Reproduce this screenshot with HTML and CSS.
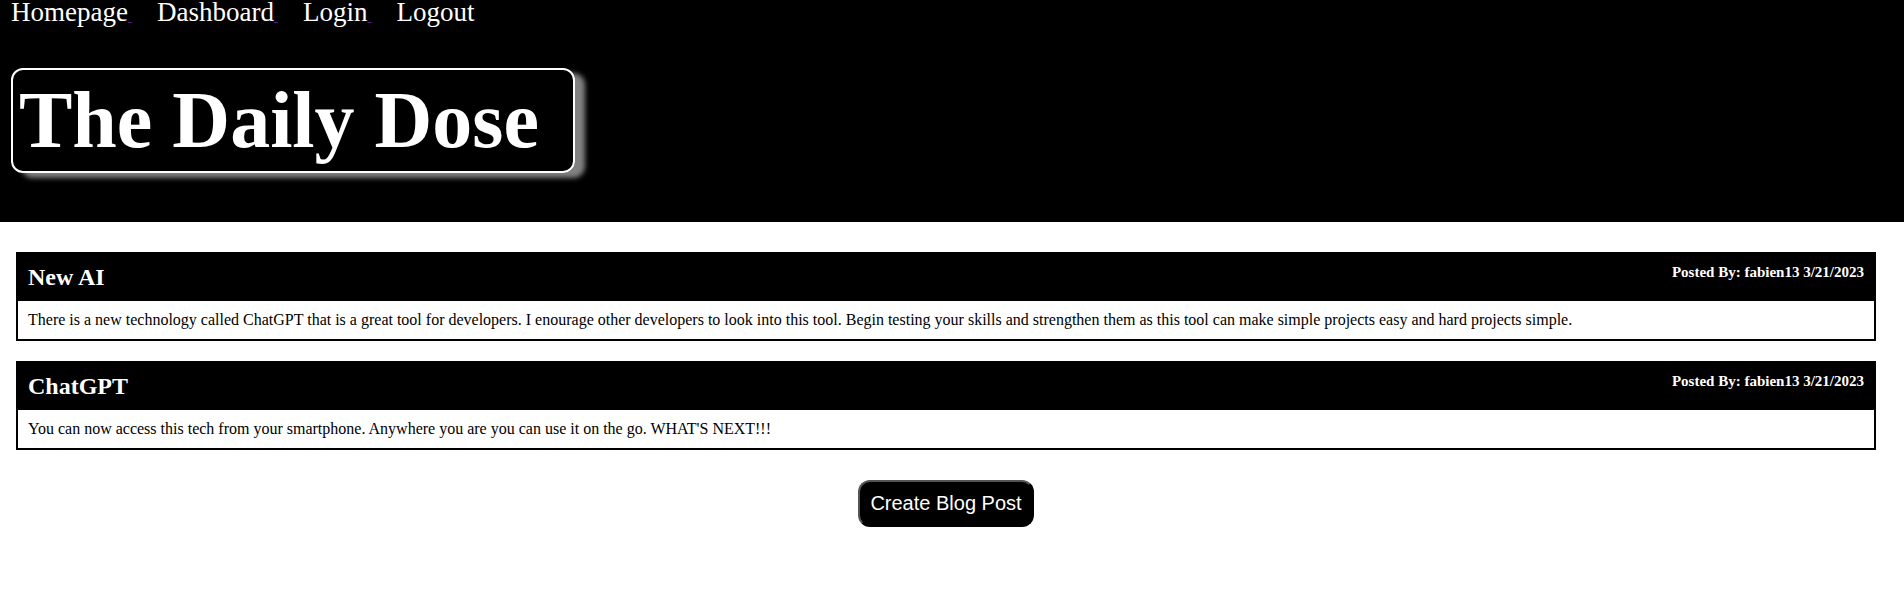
FILE: index.html
```html
<!DOCTYPE html>
<html lang="en">
<head>
<meta charset="utf-8">
<title>The Daily Dose</title>
<link rel="stylesheet" href="styles.css">
</head>
<body>
<header class="site-header">
  <nav class="nav">
    <a class="nav-link" href="#home"><span class="nav-label">Homepage</span>&nbsp;</a>
    <a class="nav-link" href="#dashboard"><span class="nav-label">Dashboard</span>&nbsp;</a>
    <a class="nav-link" href="#login"><span class="nav-label">Login</span>&nbsp;</a>
    <a class="nav-link" href="#logout"><span class="nav-label">Logout</span></a>
  </nav>
  <h1 class="site-title">The Daily Dose</h1>
</header>
<main class="content">
  <article class="post">
    <div class="post-header">
      <h2 class="post-title">New AI</h2>
      <p class="post-meta">Posted By: fabien13 3/21/2023</p>
    </div>
    <p class="post-body">There is a new technology called ChatGPT that is a great tool for developers. I enourage other developers to look into this tool. Begin testing your skills and strengthen them as this tool can make simple projects easy and hard projects simple.</p>
  </article>
  <article class="post">
    <div class="post-header">
      <h2 class="post-title">ChatGPT</h2>
      <p class="post-meta">Posted By: fabien13 3/21/2023</p>
    </div>
    <p class="post-body">You can now access this tech from your smartphone. Anywhere you are you can use it on the go. WHAT'S NEXT!!!</p>
  </article>
  <button class="create-button" type="button">Create Blog Post</button>
</main>
</body>
</html>
```
FILE: styles.css
```css
body {
  margin: 0;
  background: #fff;
  color: #000;
  font-family: "Liberation Serif", "Times New Roman", serif;
  font-size: 16px;
}

.site-header {
  display: flex;
  flex-direction: column;
  align-items: flex-start;
  gap: 40px;
  padding: 0 11px 49px;
  background: #000;
}

.nav {
  display: flex;
  gap: 25px;
  line-height: 25px;
}

.nav-link {
  color: #551a8b;
}

.nav-label {
  display: inline-block;
  color: #fff;
  font-size: 27px;
}

.site-title {
  margin: 0;
  padding: 5px 34px 5px 6px;
  border: 2px solid #fff;
  border-radius: 12px;
  box-shadow: 10px 5px 5px gray;
  color: #fff;
  font-size: 80px;
  line-height: 91px;
}

.content {
  display: flex;
  flex-direction: column;
  gap: 20px;
  padding: 30px 28px 30px 16px;
}

.post {
  border: 2px solid #000;
}

.post-header {
  display: flex;
  justify-content: space-between;
  align-items: flex-start;
  padding: 10px;
  background: #000;
  color: #fff;
}

.post-title {
  margin: 0;
  font-size: 24px;
  line-height: 27px;
}

.post-meta {
  margin: 0;
  font-size: 15px;
  font-weight: bold;
  line-height: 17px;
}

.post-body {
  margin: 0;
  padding: 10px;
  line-height: 18px;
}

.create-button {
  align-self: center;
  margin-top: 10px;
  padding: 10px;
  border: 2px outset #000;
  border-radius: 12px;
  background: #000;
  color: #fff;
  font-family: "Liberation Sans", Arial, sans-serif;
  font-size: 20px;
  line-height: 23px;
}
```
